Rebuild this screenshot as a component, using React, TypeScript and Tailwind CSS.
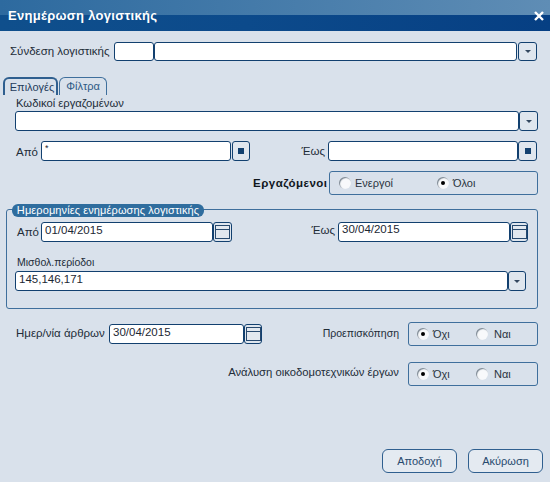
import type { ReactNode } from "react"

const font = "font-['Liberation_Sans',Arial,sans-serif]"

function Caret() {
  return (
    <svg width="6" height="3" viewBox="0 0 6 3">
      <path d="M0 0h6L3 3z" fill="#33475f" />
    </svg>
  )
}

function Dot() {
  return <span className="block h-[6px] w-[6px] bg-[#12406f]" />
}

function Calendar() {
  return (
    <svg width="15" height="14" viewBox="0 0 15 14" fill="none">
      <rect x="0.5" y="0.5" width="14" height="13" fill="#e2e8ef" stroke="#27496e" />
      <path d="M1 4.5h13" stroke="#27496e" />
    </svg>
  )
}

function Input({ className, value, small }: { className: string; value?: string; small?: boolean }) {
  return (
    <div
      className={`flex rounded-[3px] border border-b-[1.5px] border-[#12406f] bg-white pl-[3px] text-[#1c2733] ${small ? "items-start pt-[2px] text-[9px] leading-none" : "items-center text-[11.5px]"} ${className}`}
    >
      {value}
    </div>
  )
}

function SideBtn({ className, children }: { className: string; children: ReactNode }) {
  return (
    <div
      className={`flex shrink-0 items-center justify-center rounded-[3px] border border-b-[1.5px] border-[#12406f] bg-[#dfe6ee] ${className}`}
    >
      {children}
    </div>
  )
}

function Radio({ on, label, className, labelClass = "" }: { on?: boolean; label: string; className: string; labelClass?: string }) {
  return (
    <div className={`flex items-center gap-[3px] ${className}`}>
      <span className="flex h-[12px] w-[12px] items-center justify-center rounded-full bg-[#f8f9fb] shadow-[inset_1px_1px_1px_#77838f]">
        {on && <span className="h-[4px] w-[4px] rounded-full bg-black" />}
      </span>
      <span className={`mt-[1px] text-[11px] text-[#2a3440] ${labelClass}`}>{label}</span>
    </div>
  )
}

function RadioBox({ className, children }: { className: string; children: ReactNode }) {
  return (
    <div className={`flex items-center rounded-[3px] border border-[#3f6f9c] ${className}`}>
      {children}
    </div>
  )
}

export default function App() {
  return (
    <div className={`flex h-[482px] w-[550px] flex-col overflow-hidden whitespace-nowrap bg-[#d9e1eb] text-[#222c38] ${font} text-[11.5px]`}>
      {/* title bar */}
      <div className="relative flex h-[31px] shrink-0 items-center justify-between bg-[linear-gradient(90deg,#0f4f8c,#0c4a8b_45%,#063f83)] pl-[8px] pr-[6px]">
        <div className="absolute inset-x-0 top-0 h-[15px] bg-[linear-gradient(90deg,#2d6a9f,#5f8db5)]" />
        <span className="relative text-[13px] font-bold tracking-[0.3px] text-white">
          Ενημέρωση λογιστικής
        </span>
        <svg className="relative" width="10" height="10" viewBox="0 0 10 10">
          <path d="M1 1l8 8M9 1l-8 8" stroke="#fff" strokeWidth="2.4" />
        </svg>
      </div>

      {/* linked accounting */}
      <div className="mt-[11px] flex h-[19px] items-center pl-[10px]">
        <span className="w-[104px]">Σύνδεση λογιστικής</span>
        <Input className="h-full w-[40px]" />
        <Input className="h-full w-[363px]" />
        <SideBtn className="ml-px h-full w-[19px]">
          <Caret />
        </SideBtn>
      </div>

      {/* tabs */}
      <div className="mt-[15px] flex h-[19px] items-end gap-[1px] pl-[3px]">
        <div className="flex h-[18px] w-[55px] items-center justify-center rounded-t-[6px] border-x-2 border-t-2 border-[#2f5f8f] pl-[3px] text-[11px] text-[#1f3c5c]">
          Επιλογές
        </div>
        <div className="flex h-[18px] w-[48px] items-center justify-center rounded-t-[6px] border-x border-t border-[#3f6f9c] text-[11px] text-[#2d5a85]">
          Φίλτρα
        </div>
      </div>

      <div className="mt-[2px] h-[12px] pl-[16px] text-[11.25px] leading-[12px]">Κωδικοί εργαζομένων</div>

      <div className="mt-[2px] flex h-[20px] pl-[15px]">
        <Input className="h-full w-[504px]" />
        <SideBtn className="h-full w-[19px]">
          <Caret />
        </SideBtn>
      </div>

      <div className="mt-[10px] flex h-[20px] items-center pl-[16px]">
        <span className="mt-[4px] w-[25px]">Από</span>
        <Input className="h-full w-[190px]" value="*" small />
        <SideBtn className="ml-px h-full w-[18px]">
          <Dot />
        </SideBtn>
        <span className="mt-[2px] w-[78px] pr-[3px] text-right">Έως</span>
        <Input className="h-full w-[190px]" />
        <SideBtn className="h-full w-[19px]">
          <Dot />
        </SideBtn>
      </div>

      <div className="mt-[10px] flex h-[24px] items-center justify-end pr-[12px]">
        <span className="mr-[-1px] mt-[2px] w-[77px] text-[11.5px] font-bold tracking-[0.5px] text-[#10161d]">Εργαζόμενοι</span>
        <RadioBox className="h-full w-[209px] pl-[9px]">
          <Radio label="Ενεργοί" className="w-[98px]" labelClass="ml-[1px]" />
          <Radio on label="Όλοι" className="" labelClass="ml-[1px]" />
        </RadioBox>
      </div>

      {/* update dates */}
      <div className="relative ml-[6px] mt-[14px] h-[100px] w-[532px] rounded-[3px] border border-[#3f6f9c] px-[8px] pt-[12px]">
        <span className="absolute -top-[6px] left-[5px] h-[13px] w-[192px] rounded-[6px] bg-[#2f6d9e] text-center text-[11px] leading-[13px] tracking-[0.1px] text-white">
          Ημερομηνίες ενημέρωσης λογιστικής
        </span>
        <div className="flex h-[20px] items-center">
          <span className="mt-[2px] w-[26px] pl-[2px]">Από</span>
          <Input className="h-full w-[172px] pb-[3px]" value="01/04/2015" />
          <SideBtn className="h-full w-[19px]">
            <Calendar />
          </SideBtn>
          <span className="mt-[-2px] w-[106px] pr-[3px] text-right">Έως</span>
          <Input className="h-full w-[172px] pb-[4px]" value="30/04/2015" />
          <SideBtn className="h-full w-[18px]">
            <Calendar />
          </SideBtn>
        </div>
        <div className="mt-[13px] h-[14px] pl-[2px] text-[10.5px] leading-[14px]">Μισθολ.περίοδοι</div>
        <div className="mt-[2px] flex h-[20px]">
          <Input className="h-full w-[493px] pb-[2px]" value="145,146,171" />
          <SideBtn className="h-full w-[18px]">
            <Caret />
          </SideBtn>
        </div>
      </div>

      <div className="mt-[13px] flex h-[24px] items-center pl-[16px]">
        <span className="w-[93px]">Ημερ/νία άρθρων</span>
        <Input className="h-[20px] w-[135px] pb-[2px]" value="30/04/2015" />
        <SideBtn className="h-[20px] w-[18px]">
          <Calendar />
        </SideBtn>
        <span className="w-[146px] pr-[9px] text-right text-[10.5px]">Προεπισκόπηση</span>
        <RadioBox className="h-full w-[130px] pl-[8px]">
          <Radio on label="Όχι" className="w-[59px]" labelClass="ml-[1px]" />
          <Radio label="Ναι" className="" labelClass="ml-[3px]" />
        </RadioBox>
      </div>

      <div className="mt-[16px] flex h-[24px] items-center justify-end pr-[12px]">
        <span className="mr-[9px] -mt-[4px] text-[11.25px]">Ανάλυση οικοδομοτεχνικών έργων</span>
        <RadioBox className="h-full w-[130px] pl-[8px]">
          <Radio on label="Όχι" className="w-[59px]" labelClass="ml-[1px]" />
          <Radio label="Ναι" className="" labelClass="ml-[3px]" />
        </RadioBox>
      </div>

      {/* actions */}
      <div className="mt-[63px] flex h-[24px] justify-end gap-[11px] pr-[7px]">
        <button className="w-[75px] rounded-[6px] border border-[#2f5f8f] bg-[#e4eaf1] text-[11px] text-[#27496e]">
          Αποδοχή
        </button>
        <button className="w-[75px] rounded-[6px] border border-[#2f5f8f] bg-[#e4eaf1] text-[11px] text-[#27496e]">
          Ακύρωση
        </button>
      </div>
    </div>
  )
}
